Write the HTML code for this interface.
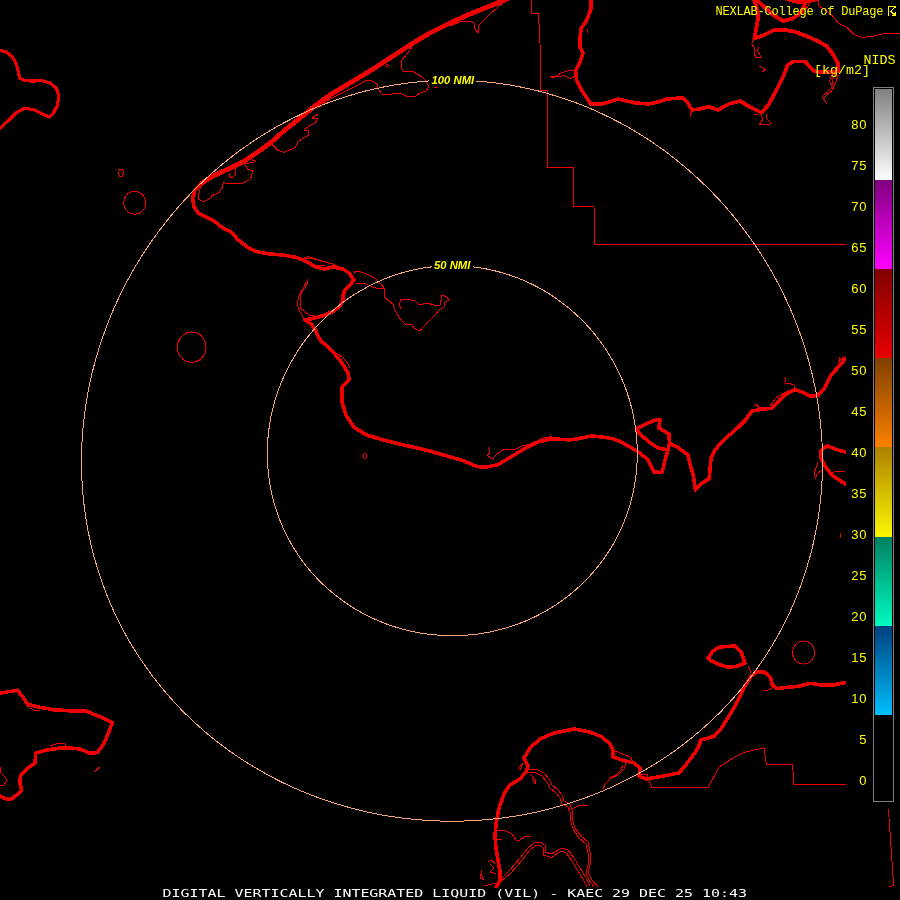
<!DOCTYPE html>
<html><head><meta charset="utf-8"><title>DIGITAL VERTICALLY INTEGRATED LIQUID (VIL) - KAEC</title>
<style>
html,body{margin:0;padding:0;background:#000;}
body{width:900px;height:900px;overflow:hidden;position:relative;}
svg{position:absolute;left:0;top:0;display:block;}
text{font-family:"Liberation Mono","DejaVu Sans Mono",monospace;}
.y{fill:#ffff00;}
.s7{font-size:12px;}
.s8{font-size:13.33px;}
.num text{font-family:"Liberation Sans",sans-serif;font-size:13px;letter-spacing:0.8px;}
.rng{font-family:"Liberation Sans",sans-serif;font-weight:bold;font-style:italic;font-size:11.3px;fill:#ffff00;}
</style></head>
<body>
<svg width="900" height="900" viewBox="0 0 900 900">
<defs><linearGradient id="g0" x1="0" y1="0" x2="0" y2="1"><stop offset="0" stop-color="#808080"/><stop offset="1" stop-color="#ffffff"/></linearGradient><linearGradient id="g1" x1="0" y1="0" x2="0" y2="1"><stop offset="0" stop-color="#800080"/><stop offset="1" stop-color="#ff00ff"/></linearGradient><linearGradient id="g2" x1="0" y1="0" x2="0" y2="1"><stop offset="0" stop-color="#800000"/><stop offset="1" stop-color="#e80000"/></linearGradient><linearGradient id="g3" x1="0" y1="0" x2="0" y2="1"><stop offset="0" stop-color="#804000"/><stop offset="1" stop-color="#fc8000"/></linearGradient><linearGradient id="g4" x1="0" y1="0" x2="0" y2="1"><stop offset="0" stop-color="#ac8000"/><stop offset="1" stop-color="#fcf800"/></linearGradient><linearGradient id="g5" x1="0" y1="0" x2="0" y2="1"><stop offset="0" stop-color="#008060"/><stop offset="1" stop-color="#00fcc0"/></linearGradient><linearGradient id="g6" x1="0" y1="0" x2="0" y2="1"><stop offset="0" stop-color="#004080"/><stop offset="1" stop-color="#00c0fc"/></linearGradient><mask id="tm" maskUnits="userSpaceOnUse" x="0" y="0" width="900" height="900"><rect width="900" height="900" fill="#fff"/></mask></defs>
<rect width="900" height="900" fill="#000"/>
<g fill="none" stroke="#f00000" stroke-linejoin="round" stroke-linecap="round" shape-rendering="crispEdges">
<path stroke-width="1" d="M123.5 173 L123 175.2 L121.8 176.6 L120.2 176.6 L119 175.2 L118.5 173 L119 170.8 L120.2 169.4 L121.8 169.4 L123 170.8 Z M145.7 202.8 L145.2 206.4 L143.6 209.6 L141.2 212.1 L138.1 213.7 L134.7 214.3 L131.3 213.7 L128.2 212.1 L125.8 209.6 L124.2 206.4 L123.7 202.8 L124.2 199.2 L125.8 196 L128.2 193.5 L131.3 191.9 L134.7 191.3 L138.1 191.9 L141.2 193.5 L143.6 196 L145.2 199.2 Z M206.1 347.2 L205.4 351.9 L203.3 356.2 L200.2 359.6 L196.1 361.8 L191.7 362.5 L187.3 361.8 L183.2 359.6 L180.1 356.2 L178 351.9 L177.3 347.2 L178 342.5 L180.1 338.2 L183.2 334.8 L187.3 332.6 L191.7 331.9 L196.1 332.6 L200.2 334.8 L203.3 338.2 L205.4 342.5 Z M814.6 652.5 L814.1 656.1 L812.5 659.3 L810.1 661.9 L807 663.5 L803.6 664.1 L800.2 663.5 L797.1 661.9 L794.7 659.3 L793.1 656.1 L792.6 652.5 L793.1 648.9 L794.7 645.7 L797.1 643.1 L800.2 641.5 L803.6 640.9 L807 641.5 L810.1 643.1 L812.5 645.7 L814.1 648.9 Z M366.5 456 L366.1 457.8 L365 458.5 L363.9 457.8 L363.5 456 L363.9 454.2 L365 453.5 L366.1 454.2 Z M200.8 186.7 L198.3 195 L198.3 199 L203.3 201.7 L210.8 198.3 L211.7 195.8 L219 192.5 L222.5 186.7 L223.3 182.5 L228.3 184 L243.3 183 L249 180 L251.7 176.7 L252.5 170.8 L247.5 169 L245.8 165.8 L244 164 L255.8 161.7 L252.5 160 M230 173 L229 175.8 L231.7 178 L235 175 L235.8 168 M272.5 145 L277.5 150 L284 152.5 L295 147.5 L298.3 141.7 L304 137.5 L309 135 L308.3 130.8 L304 130 L309 126 L315 123 L318 119 L312 118 L318 114 M412 47 L407 54 L402 60 L401 67 L403 71 L414 72 L422 77 L426 81 L429 87 L426 91 L420 93 L416 96 L406 96 L400 93 L392 94 L382 94 L378 89 L377 84 L372 81 L367 80 L360 84 L350 89 L340 94 L330 99 L318 108 M504 2 L490 14 L484 20 L479 25 L478 33 L475 29 L474 23 L470 21 L460 22 L450 26 M434 87.5 L438 87.5 M388.2 65.5 L387.6 66.8 L386.4 66.8 L385.8 65.5 L386.4 64.2 L387.6 64.2 Z M531 0 L532 13.5 L538.5 13.5 L540 44 L541 90.5 L547.5 90.5 L548 167.5 L573.5 167.5 L574 206.5 L594 206.5 L594.5 244.5 L846 244.5 M550 76.7 L555.6 76.7 L561 73 L566.7 71 L574.4 70 M552 77.5 L564.4 75.6 L571 78.9 L575 76 M692 110 L690 117 M818 0 L818.7 5.8 L826.7 10.8 L832.4 15.9 L838.2 23 L846.9 27.4 L854 34.7 L862 37.3 L871 36.7 L882 34 L891 33 L900 33 M806.4 8.7 L809 4 L812 1.4 M754.4 39 L751.6 43.3 L754.4 47.7 L755.2 57.8 L761.7 57.8 L757.3 50.6 L758.8 47 M759.5 66.4 L765.3 69.3 L763 71.5 M832.4 73.7 L829.6 80.9 L832.4 86.7 L826.7 92.4 L822.3 96.8 L826.7 104 M838.2 75 L835.3 83.8 L831 92.4 L825 94 M835 74 L832 82 L834 88 L829 93 L824 98 M761.7 114 L762.4 120 L759.5 124.2 L768.9 125 L771 122.8 L766.7 118.4 L766.7 114 M754.4 114.8 L758 114 M307 279 L308 283 L305 288 L302 290 L299 296 L297 304 L299 310 L302 315 L304 319 M306 282 L301 294 L300 302 L301 309 L304 311 L309 315 L315 316 M354 274 L355 271 L361 272 L369 275 L376 279 L381 284 L384 288 L384 294 L385 298 L389 301 L393 304 L394 308 L397 314 L401 320 L405 324 L412 325 L414 328 L420 331 L423 327 L429 321 L435 315 L439 310 L444 307 L445 302 L449 300 L447 297 L442 295 L441 300 L440 305 L434 305 L427 303 L419 305 L415 301 L409 299.6 L401 299.6 L399 304 L401 309 M355 283 L365 283.6 L373 287 L379 289 L384 288 M305 258 L311 258 L321 261 L333 264 L339 267 M315 265 L325 266 M303.3 258.3 L308.3 256.7 L321.7 260.8 L330 263.3 M337 353 L343 358 L347 362 L350 368 M488.7 447.3 L490 452.7 L487.3 455.3 L492.7 459.3 L495.3 455.3 L503.3 449.5 L514 450 L522 446 L528.7 444.7 L543.3 438 L551.3 436.7 M818 462.4 L814.2 472.7 L815.5 479 L817 474 L822 470 M832 472.7 L838 471 L845 472 M840 533 L840 538 M795 389 L793.8 384.5 L784.8 383 L786 376.8 M755.4 405 L759 407.5 L757 404 M770 406 L776 398 L784 393 L790 390 M839.8 357.7 L838.5 362.8 L843.6 356.4 M638.6 774 L647 774.5 L649.6 781.6 L652 787.5 L708.2 787.5 L719.2 766.9 L732.7 758.3 L744.9 752.2 L764 747.8 L766.4 764.5 L792.6 764.5 L793.8 784.5 L846 784.5 M763.2 691 L768 690 L772 688 M748.6 666.7 L751 672.8 M888.5 810 L893.6 885.6 L889 887 M518 768 L523 763 L520 770 Z M528 770 L536 769 L544 773 L549 779 L552 785 L558 790 L562 795 L564 801 L570 804 L572 810 L572 818 L575 828 L581 836 L588 842 L590 852 L591 862 L588 872 L592 880 L598 887 M526 773 L534 772 L542 776 L547 782 L550 788 L556 793 L560 798 L562 804 L568 807 L570 812 L570 819 L573 829 L579 838 L586 844 L588 853 L589 862 L586 872 L589 880 L594 887 M572 809 L578 806 L588 805 M530 774 L536 780 L535 784 L532 778 M626 763 L624 769 L618 775 L610 779 L605 784 L603 789 M623 765 L621 770 L616 775 L609 778 M613 750 L620 753 L630 757 L634 763 M497 830 L506 831 L512 834 L516 840 L520 840 L524 837 L531 836 M497 839 L502 839 M502 878 L510 870 L520 858 L528 848 L534 843 L540 842 L545 845 L545 852 L552 854 L558 850 L562 848 L568 850 L574 858 L580 868 L585 876 L590 886 M500 882 L511 873 L522 860 L530 850 L535 846 L540 845 L543 848 L543 855 L552 857.5 L558 853 L562 851 L566 853 L572 861 L578 871 L583 879 L587 887 M490 864 L494 868 L490 872 L496 874 M488 862 L492 860 L495 864 M482 870 L480 878 L484 880 L481 874 M484 886 L496 883 M95 771.7 L99 767.5 M0 766.7 L0.8 773 L5 776.7 L6.7 780.8 L4.2 785 L0 785 M25.8 705 L33.3 710 L40 710.8 M50 745.8 L58.3 743.3 L65 743.7 L65.3 747 M587.8 29 L587.8 33"/>
<path stroke-width="3.6" d="M201.7 183.3 L195 190 L192.5 198.3 L194 206.7 L198.3 213.3 L206.7 217.5 L215 221.7 L223.3 228.3 L231.7 232.5 L238.3 240 L246.7 246.7 L256.7 251.7 L270 254 L283.3 255 L296.7 257.5 L306.7 261.7 L315 266.7 L324 269 L333 267 L343 269 L349 273 L354 280 L350 285 L345 290 L343 295 L343 300 L340 306 L334 311 L325 315 L315 318 L305 320 L311 324 L315 329 L318 336 L321 341 L327 346 L333 352 L339 359 L344 366 L348 373 L349.2 379.3 L342 387.3 L342 402 L346 415.3 L354 427.3 L367.3 435.3 L383.3 439.9 L404.7 445.2 L426 450 L444.7 455.3 L463.3 460.7 L476.7 466.5 L484.7 467.3 L498 464.7 L511.3 456.7 L524.7 448.7 L538 442 L551.3 438.8 L570 439.9 L576 439 L592 436 L606 437.5 L614 439 L622 442.5 L630 447 L640 453 L648 460 L654 472 L662 472.5 L665 460 L668 450 L669.5 443 L678 447.5 L688 455 L690 464 L693 474 L695.5 490 L702 483 L709 479 L710 470 L711 458 L715 450 L720 444 L727.3 436.9 L737.6 427.9 L745.2 420.3 L751.6 411.3 L760.6 409.3 L772 408.3 L779.7 399.8 L787.4 393.4 L795 389.6 L802.7 392.2 L810.4 396 L818 395.5 L824.4 388.3 L830.8 375.6 L838.5 366.6 L845.4 358.9 M668 450 L658 448 L649 442 L640 434 L636.5 429 L646 424 L657 419.5 L660 420 L659 428 L669 434 L669.5 443 M591 0 L591 9 L586.7 20 L581 29 L580 37.8 L580 46.7 L583 53 L580 62 L575.6 71 L576.7 80 L582 91 L586.7 97.8 L591 104 L602 104 L609 102 L617.8 99 L626.7 101 L635.6 103 L649 104 L657.8 102 L666.7 99 L683 97.8 L687.8 103 L692 110 L700 109 L709 106.7 L717.8 110 L729 104 L740 101 M845.4 452.2 L837.2 449.7 L827 445.8 L820.6 451 L820.6 457.3 L824.4 465 L832 475.2 L839.8 480.3 L845.4 484 M708.2 658 L713 650.8 L720.4 647 L735.1 645.9 L741.2 652 L744.9 663 L737.6 666.2 L727.8 667.2 L718 664.2 L710.7 660.6 Z M495 890 L496 888 L500 880 L500 872 L498 860 L496 848 L495 836 L496 824 L499 808 L504 794 L510 785 L520 779 L526 772 L528 766 L524 758 L530 748 L540 739 L554 733 L574 729 L590 732 L602 737 L610 744 L613 750 L613 757 L622 760 L634 763 L640 768 L639 776 L646 779 L655 777.6 L666.7 775.4 L678.9 773 L686.2 764.4 L693.6 754.7 L698.4 747.3 L700.9 740 L714.3 736.3 L721.7 727.8 L727.8 718 L735.1 705.8 L740 696 L744.9 686.2 L751 676.4 L757.1 671.6 L764.4 672 L770.6 677.7 L772.3 685 L776.7 688.7 L786.4 687.4 L798.7 686.2 L810.9 683.3 L820.7 685 L832.9 685 L845.1 682.6 M-1 693.5 L8.3 691.7 L17.5 690.3 L22.5 696.7 L27.5 704 L38.3 707 L53.3 709.7 L70 710.8 L86.7 711.3 L100 716.7 L112.5 722.5 L108.3 733.3 L104 743.3 L97.5 752.5 L90 753.3 L80 749 L70 748 L58.3 748.3 L46.7 750 L35.8 753 L35 763.3 L27.5 768.3 L20.8 775 L19.7 781.7 L21.7 790.8 L15.8 795.8 L10 799.7 L4.2 798.3 L-1 795.5"/>
<path stroke-width="4.8" d="M507 -1 L490 6 L470 14 L450 23 L430 33 L410 45 L390 58 L370 71 L350 83 L330 95 L314 106.7 L299 119 L285 130 L271.7 141.7 L258.3 151.7 L243.3 161.7 L228.3 169 L213.3 175.8 L201.7 183.3"/>
<path stroke-width="3.2" d="M-1 50 L6.7 52.2 L12.2 56.7 L16 63.3 L18.2 71 L19.6 77.8 L24.4 80.7 L33.3 81 L42.2 80.7 L51 83.3 L56.7 88.9 L58.9 96.7 L57.3 105.6 L53.3 113.3 L49.3 117 L42.2 114 L33.3 109.6 L24.4 108.2 L15.6 113.3 L7.8 121 L-1 129.5"/>
<path stroke-width="3.8" d="M740 101 L750 107 L761.7 112.7 L769 104 L776 91 L783.3 76.6 L787.7 65 L793.4 61.4 L805 61.4 L810.8 67.9 L815 71.5 L826.7 72 L838.2 71.5 L838.2 63.6 L832.4 53.4 L826.7 46.2 L818 41.2 L806.4 36 L794.9 31.8 L783.3 29.6 L773.2 30.3 L763 35.4 L754.4 38.3 L755.9 30.3 L758 18.8 L757.3 8.7 L753.7 -1 M755.9 -1 L764.6 7.2 L774.7 15.9 L783.3 21 L792 18.8 L800.7 13 L804.3 5.8 L806.4 -1 M787.7 -1 L797.8 2.2 L805 2.2 L816.6 -1"/>
</g>
<g fill="none" stroke="#f4a77a" stroke-width="1" shape-rendering="crispEdges"><path d="M822.5 461.8 L822.4 471.5 L822 481.2 L821.4 490.8 L820.5 500.4 L819.3 510 L817.9 519.5 L816.3 529 L814.4 538.4 L812.3 547.7 L809.9 557 L807.2 566.1 L804.4 575.2 L801.2 584.3 L797.9 593.2 L794.3 602 L790.5 610.7 L786.4 619.3 L782.1 627.7 L777.6 636.1 L772.9 644.3 L767.9 652.4 L762.7 660.3 L757.3 668.1 L751.7 675.8 L745.9 683.2 L739.9 690.6 L733.7 697.7 L727.3 704.8 L720.8 711.6 L714 718.2 L707 724.7 L699.9 731 L692.6 737.1 L685.2 743 L677.5 748.8 L669.8 754.3 L661.9 759.6 L653.8 764.7 L645.6 769.6 L637.2 774.3 L628.8 778.8 L620.2 783.1 L611.5 787.2 L602.7 791 L593.8 794.6 L584.8 798 L575.7 801.2 L566.5 804.1 L557.2 806.8 L547.9 809.3 L538.5 811.6 L529 813.6 L519.5 815.4 L510 816.9 L500.4 818.2 L490.7 819.3 L481.1 820.1 L471.4 820.7 L461.7 821.1 L452 821.2 L442.3 821.1 L432.6 820.7 L422.9 820.1 L413.3 819.3 L403.6 818.2 L394 816.9 L384.5 815.4 L375 813.6 L365.5 811.6 L356.1 809.3 L346.8 806.8 L337.5 804.1 L328.3 801.2 L319.2 798 L310.2 794.6 L301.3 791 L292.5 787.2 L283.8 783.1 L275.2 778.8 L266.8 774.3 L258.4 769.6 L250.2 764.7 L242.1 759.6 L234.2 754.3 L226.5 748.8 L218.8 743 L211.4 737.1 L204.1 731 L197 724.7 L190 718.2 L183.2 711.6 L176.7 704.8 L170.3 697.7 L164.1 690.6 L158.1 683.2 L152.3 675.8 L146.7 668.1 L141.3 660.3 L136.1 652.4 L131.1 644.3 L126.4 636.1 L121.9 627.7 L117.6 619.3 L113.5 610.7 L109.7 602 L106.1 593.2 L102.8 584.3 L99.6 575.2 L96.8 566.1 L94.1 557 L91.7 547.7 L89.6 538.4 L87.7 529 L86.1 519.5 L84.7 510 L83.5 500.4 L82.6 490.8 L82 481.2 L81.6 471.5 L81.5 461.8 L81.6 452.1 L82 442.4 L82.6 432.7 L83.5 423 L84.7 413.3 L86.1 403.6 L87.7 393.9 L89.6 384.3 L91.7 374.7 L94.1 365.2 L96.8 355.7 L99.6 346.3 L102.8 336.9 L106.1 327.6 L109.7 318.4 L113.5 309.3 L117.6 300.3 L121.9 291.3 L126.4 282.5 L131.1 273.8 L136.1 265.2 L141.3 256.7 L146.7 248.4 L152.3 240.2 L158.1 232.2 L164.1 224.3 L170.3 216.5 L176.7 208.9 L183.2 201.5 L190 194.3 L197 187.2 L204.1 180.3 L211.4 173.7 L218.8 167.2 L226.5 160.9 L234.2 154.8 L242.1 148.9 L250.2 143.3 L258.4 137.8 L266.7 132.6 L275.2 127.6 L283.8 122.9 L292.5 118.4 L301.3 114.1 L310.2 110 L319.2 106.2 L328.3 102.7 L337.5 99.4 L346.8 96.4 L356.1 93.6 L365.5 91 L375 88.8 L384.5 86.8 L394 85 L403.6 83.6 L413.3 82.4 L422.9 81.4 L432.6 80.7 L442.3 80.3 L452 80.2 L461.7 80.3 L471.4 80.7 L481.1 81.4 L490.7 82.4 L500.4 83.6 L510 85 L519.5 86.8 L529 88.8 L538.5 91 L547.9 93.6 L557.2 96.4 L566.5 99.4 L575.7 102.7 L584.8 106.2 L593.8 110 L602.7 114.1 L611.5 118.4 L620.2 122.9 L628.8 127.6 L637.2 132.6 L645.6 137.8 L653.8 143.3 L661.9 148.9 L669.8 154.8 L677.5 160.9 L685.2 167.2 L692.6 173.7 L699.9 180.3 L707 187.2 L714 194.3 L720.8 201.5 L727.3 208.9 L733.7 216.5 L739.9 224.3 L745.9 232.2 L751.7 240.2 L757.3 248.4 L762.7 256.7 L767.9 265.2 L772.9 273.8 L777.6 282.5 L782.1 291.3 L786.4 300.3 L790.5 309.3 L794.3 318.4 L797.9 327.6 L801.2 336.9 L804.4 346.3 L807.2 355.7 L809.9 365.2 L812.3 374.7 L814.4 384.3 L816.3 393.9 L817.9 403.6 L819.3 413.3 L820.5 423 L821.4 432.7 L822 442.4 L822.4 452.1 Z"/><path d="M637.3 453.5 L637.2 458.3 L637 463.1 L636.7 468 L636.3 472.8 L635.7 477.6 L635 482.3 L634.2 487.1 L633.3 491.8 L632.2 496.5 L631 501.2 L629.7 505.8 L628.2 510.4 L626.7 514.9 L625 519.4 L623.2 523.9 L621.3 528.3 L619.3 532.6 L617.1 536.9 L614.9 541.1 L612.5 545.3 L610 549.4 L607.5 553.4 L604.8 557.4 L602 561.3 L599.1 565.1 L596.1 568.8 L593 572.5 L589.8 576 L586.5 579.5 L583.1 582.9 L579.6 586.2 L576.1 589.4 L572.4 592.5 L568.7 595.6 L564.9 598.5 L561 601.3 L557.1 604.1 L553.1 606.7 L549 609.2 L544.8 611.6 L540.6 613.9 L536.3 616.1 L531.9 618.2 L527.5 620.2 L523.1 622 L518.6 623.8 L514.1 625.4 L509.5 626.9 L504.8 628.3 L500.2 629.6 L495.5 630.7 L490.8 631.8 L486 632.7 L481.2 633.5 L476.4 634.2 L471.6 634.7 L466.8 635.1 L462 635.5 L457.1 635.6 L452.3 635.7 L447.5 635.6 L442.6 635.5 L437.8 635.1 L433 634.7 L428.2 634.2 L423.4 633.5 L418.6 632.7 L413.8 631.8 L409.1 630.7 L404.4 629.6 L399.8 628.3 L395.1 626.9 L390.5 625.4 L386 623.8 L381.5 622 L377.1 620.2 L372.7 618.2 L368.3 616.1 L364 613.9 L359.8 611.6 L355.6 609.2 L351.5 606.7 L347.5 604.1 L343.6 601.3 L339.7 598.5 L335.9 595.6 L332.2 592.5 L328.5 589.4 L325 586.2 L321.5 582.9 L318.1 579.5 L314.8 576 L311.6 572.5 L308.5 568.8 L305.5 565.1 L302.6 561.3 L299.8 557.4 L297.1 553.4 L294.6 549.4 L292.1 545.3 L289.7 541.1 L287.5 536.9 L285.3 532.6 L283.3 528.3 L281.4 523.9 L279.6 519.4 L277.9 514.9 L276.4 510.4 L274.9 505.8 L273.6 501.2 L272.4 496.5 L271.3 491.8 L270.4 487.1 L269.6 482.3 L268.9 477.6 L268.3 472.8 L267.9 468 L267.6 463.1 L267.4 458.3 L267.3 453.5 L267.4 448.6 L267.6 443.8 L267.9 438.9 L268.3 434.1 L268.9 429.3 L269.6 424.5 L270.4 419.7 L271.3 414.9 L272.4 410.1 L273.6 405.4 L274.9 400.7 L276.4 396 L277.9 391.4 L279.6 386.8 L281.4 382.3 L283.3 377.8 L285.3 373.3 L287.5 368.9 L289.7 364.6 L292.1 360.3 L294.6 356.1 L297.1 351.9 L299.8 347.8 L302.6 343.8 L305.5 339.8 L308.5 336 L311.6 332.2 L314.8 328.4 L318.1 324.8 L321.5 321.3 L325 317.8 L328.5 314.5 L332.2 311.2 L335.9 308 L339.7 305 L343.6 302 L347.5 299.1 L351.5 296.4 L355.6 293.7 L359.8 291.2 L364 288.8 L368.3 286.4 L372.7 284.2 L377.1 282.2 L381.5 280.2 L386 278.3 L390.5 276.6 L395.1 275 L399.8 273.5 L404.4 272.2 L409.1 271 L413.8 269.9 L418.6 268.9 L423.4 268 L428.2 267.3 L433 266.7 L437.8 266.3 L442.6 266 L447.5 265.8 L452.3 265.7 L457.1 265.8 L462 266 L466.8 266.3 L471.6 266.7 L476.4 267.3 L481.2 268 L486 268.9 L490.8 269.9 L495.5 271 L500.2 272.2 L504.8 273.5 L509.5 275 L514.1 276.6 L518.6 278.3 L523.1 280.2 L527.5 282.2 L531.9 284.2 L536.3 286.4 L540.6 288.8 L544.8 291.2 L549 293.7 L553.1 296.4 L557.1 299.1 L561 302 L564.9 305 L568.7 308 L572.4 311.2 L576.1 314.5 L579.6 317.8 L583.1 321.3 L586.5 324.8 L589.8 328.4 L593 332.2 L596.1 336 L599.1 339.8 L602 343.8 L604.8 347.8 L607.5 351.9 L610 356.1 L612.5 360.3 L614.9 364.6 L617.1 368.9 L619.3 373.3 L621.3 377.8 L623.2 382.3 L625 386.8 L626.7 391.4 L628.2 396 L629.7 400.7 L631 405.4 L632.2 410.1 L633.3 414.9 L634.2 419.7 L635 424.5 L635.7 429.3 L636.3 434.1 L636.7 438.9 L637 443.8 L637.2 448.6 Z"/></g>
<rect x="429" y="74" width="47" height="12" fill="#000"/>
<rect x="432" y="259" width="41" height="12" fill="#000"/>
<g mask="url(#tm)"><text class="rng" x="431.5" y="84">100 NMI</text>
<text class="rng" x="434" y="269">50 NMI</text></g>
<rect x="846" y="50" width="54" height="756" fill="#000"/>
<g shape-rendering="crispEdges">
<rect x="873.5" y="87.500" width="20" height="714" fill="none" stroke="#808080" stroke-width="1"/>
<rect x="875" y="89" width="17" height="91" fill="url(#g0)"/><rect x="875" y="180" width="17" height="89" fill="url(#g1)"/><rect x="875" y="269" width="17" height="89" fill="url(#g2)"/><rect x="875" y="358" width="17" height="89" fill="url(#g3)"/><rect x="875" y="447" width="17" height="90" fill="url(#g4)"/><rect x="875" y="537" width="17" height="89" fill="url(#g5)"/><rect x="875" y="626" width="17" height="89" fill="url(#g6)"/>
</g>
<g mask="url(#tm)"><g class="y num"><text x="867.3" y="129" text-anchor="end">80</text><text x="867.3" y="170" text-anchor="end">75</text><text x="867.3" y="211" text-anchor="end">70</text><text x="867.3" y="252" text-anchor="end">65</text><text x="867.3" y="293" text-anchor="end">60</text><text x="867.3" y="334" text-anchor="end">55</text><text x="867.3" y="375" text-anchor="end">50</text><text x="867.3" y="416" text-anchor="end">45</text><text x="867.3" y="457" text-anchor="end">40</text><text x="867.3" y="498" text-anchor="end">35</text><text x="867.3" y="539" text-anchor="end">30</text><text x="867.3" y="580" text-anchor="end">25</text><text x="867.3" y="621" text-anchor="end">20</text><text x="867.3" y="662" text-anchor="end">15</text><text x="867.3" y="703" text-anchor="end">10</text><text x="867.3" y="744" text-anchor="end">5</text><text x="867.3" y="785" text-anchor="end">0</text></g>
<g class="y s8"><text x="863.5" y="64">NIDS</text><text x="814" y="74">[kg/m2]</text></g>
<g class="y s7">
<text x="715.5" y="15" textLength="168" lengthAdjust="spacing">NEXLAB-College of DuPage</text>
</g></g>
<g fill="#ffff00" shape-rendering="crispEdges"><rect x="888" y="6" width="1" height="10"/><rect x="888" y="6" width="7.500" height="1"/><path d="M894 7 L890 11 L893 15 L894.500 15 L894.500 14 L891.500 11 L895.500 7.500 L895.500 7 Z"/><path d="M895.500 12 V15.500 H892 Z"/></g>
<rect x="0" y="888" width="880" height="12" fill="#000"/>
<g mask="url(#tm)"><text transform="translate(162.6,897) scale(1.359,1)" style="font-family:'DejaVu Sans Mono',monospace;font-size:11px" fill="#ffffff">DIGITAL VERTICALLY INTEGRATED LIQUID (VIL) - KAEC 29 DEC 25 10:43</text></g>
</svg>
</body></html>
